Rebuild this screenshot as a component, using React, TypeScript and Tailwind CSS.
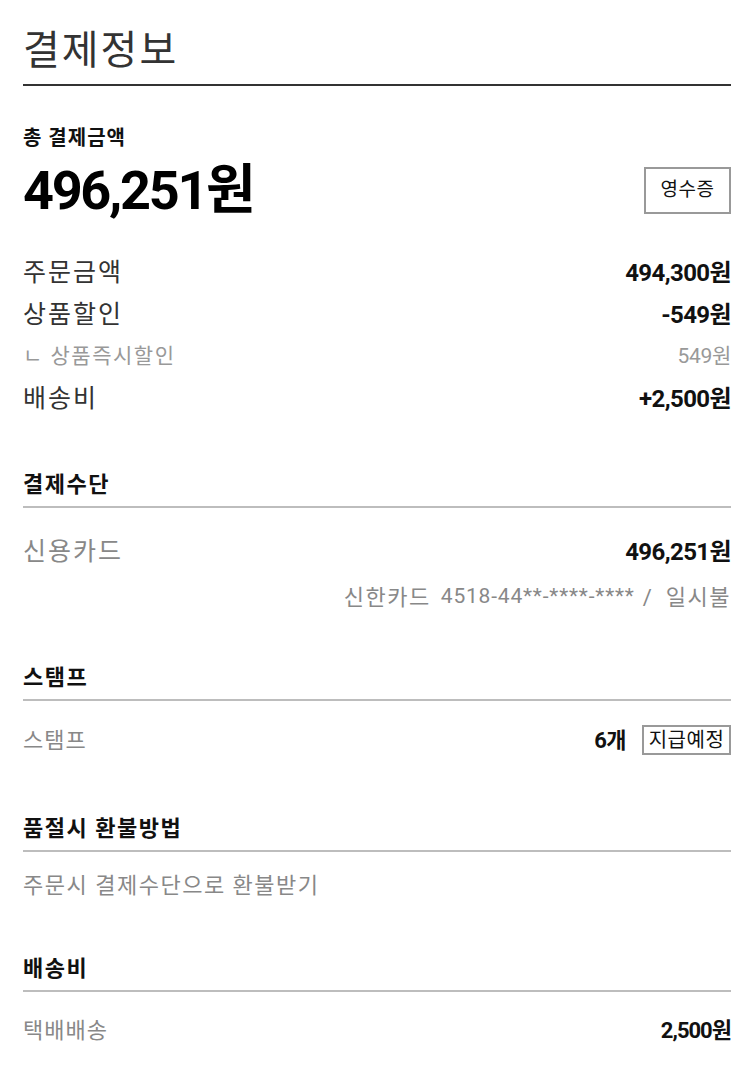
const font = { fontFamily: "Roboto, 'Noto Sans CJK KR', sans-serif" };

function Row({ label, value, sub }: { label: string; value: string; sub?: boolean }) {
  return (
    <div className="flex h-[42px] items-center justify-between">
      <span
        className={
          sub
            ? "text-[21px] tracking-[1.5px] text-[#999]"
            : "text-[25px] tracking-[2px] text-[#333]"
        }
      >
        {label}
      </span>
      <span
        className={
          sub
            ? "text-[21px] tracking-[-0.3px] text-[#999]"
            : "text-[24px] font-bold tracking-[-0.6px] text-[#111]"
        }
      >
        {value}
      </span>
    </div>
  );
}

function Heading({ title, className }: { title: string; className: string }) {
  return (
    <h2
      className={`border-b-2 border-[#bdbdbd] pb-[7px] text-[22px] font-bold leading-[28px] tracking-[1.5px] text-[#111] ${className}`}
    >
      {title}
    </h2>
  );
}

export default function App() {
  return (
    <div className="min-h-[1082px] bg-white pb-[30px] pl-[23px] pr-[19px]" style={font}>
      <h1 className="h-[86px] border-b-2 border-[#333] pt-[25px] text-[40px] leading-[52px] tracking-[2px] text-[#333]">
        결제정보
      </h1>

      <section>
        <h2 className="mt-[38px] text-[20px] font-bold leading-[28px] tracking-[1px] text-[#111]">
          총 결제금액
        </h2>
        <div className="mt-[8px] flex h-[60px] items-center justify-between">
          <span className="text-[54px] font-bold tracking-[-2.3px] text-black">496,251원</span>
          <button className="flex h-[47px] w-[87px] items-center justify-center border-2 border-[#999] text-[19px] tracking-[0.5px] text-[#111]">
            영수증
          </button>
        </div>
      </section>

      <section className="mt-[32px]">
        <Row label="주문금액" value="494,300원" />
        <Row label="상품할인" value="-549원" />
        <Row label="ㄴ 상품즉시할인" value="549원" sub />
        <Row label="배송비" value="+2,500원" />
      </section>

      <Heading title="결제수단" className="mt-[51px]" />
      <div className="mt-[22px] flex h-[44px] items-center justify-between">
        <span className="text-[25px] tracking-[2px] text-[#888]">신용카드</span>
        <span className="text-[24px] font-bold tracking-[-0.6px] text-[#111]">496,251원</span>
      </div>
      <div className="mt-[8px] flex h-[30px] items-center justify-end text-[22px] text-[#888]">
        <span className="tracking-[1.5px]">신한카드</span>
        <span className="ml-[10px] text-[21px] tracking-[0.8px]">4518-44**-****-****</span>
        <span className="ml-[8px]">/</span>
        <span className="ml-[14px] tracking-[1.5px]">일시불</span>
      </div>

      <Heading title="스탬프" className="mt-[52px]" />
      <div className="mt-[23px] flex h-[32px] items-center justify-between">
        <span className="text-[22px] tracking-[1px] text-[#888]">스탬프</span>
        <div className="flex items-center gap-[16px]">
          <span className="text-[22px] font-bold tracking-[-0.5px] text-[#111]">6개</span>
          <span className="flex h-[30px] w-[89px] items-center justify-center border-2 border-[#999] text-[20px] tracking-[0.5px] text-[#111]">
            지급예정
          </span>
        </div>
      </div>

      <Heading title="품절시 환불방법" className="mt-[59px]" />
      <p className="mt-[19px] text-[22px] leading-[30px] tracking-[1.5px] text-[#888]">
        주문시 결제수단으로 환불받기
      </p>

      <Heading title="배송비" className="mt-[54px]" />
      <div className="mt-[23px] flex h-[30px] items-center justify-between">
        <span className="text-[22px] tracking-[1px] text-[#888]">택배배송</span>
        <span className="text-[22px] font-bold tracking-[-1px] text-[#111]">2,500원</span>
      </div>
    </div>
  );
}
